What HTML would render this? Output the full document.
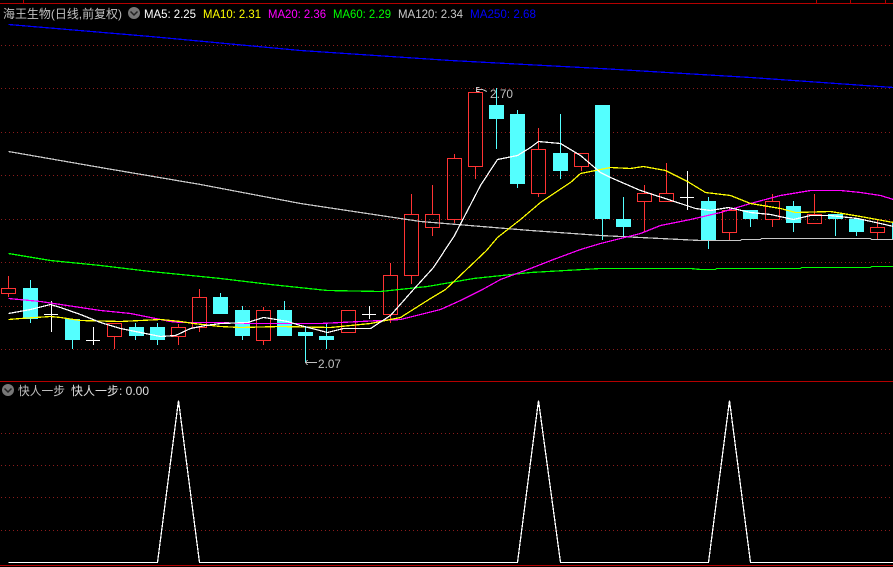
<!DOCTYPE html>
<html><head><meta charset="utf-8"><style>
html,body{margin:0;padding:0;background:#000;width:893px;height:567px;overflow:hidden}
svg{display:block}
text{font-family:"Liberation Sans","Noto Sans CJK SC",sans-serif;font-size:12px}
</style></head><body>
<svg width="893" height="567" viewBox="0 0 893 567" xmlns="http://www.w3.org/2000/svg">
<rect width="893" height="567" fill="#000"/>
<g fill="#b40000">
<rect x="0" y="3" width="893" height="1"/><rect x="0" y="381" width="893" height="1"/><rect x="0" y="565" width="893" height="1"/>
<rect x="23" y="0" width="1" height="3"/><rect x="816" y="0" width="1" height="3"/><rect x="850" y="0" width="1" height="3"/><rect x="885" y="0" width="1" height="3"/>
</g>
<g stroke="#8c1c1c" stroke-width="1" stroke-dasharray="1 3" shape-rendering="crispEdges" fill="none">
<path d="M1 45.5H893M1 88.5H893M1 132.5H893M1 175.500H893M1 219.500H893M1 262.500H893M1 306.500H893M1 349.500H893M1 433.500H893M1 465.500H893M1 497.500H893M1 530.500H893"/>
</g>
<text x="490" y="98" fill="#c0c0c0" textLength="23" lengthAdjust="spacingAndGlyphs">2.70</text>
<g shape-rendering="crispEdges">
<path stroke="#54ffff" fill="none" d="M30.5 280V323M72.5 340V349M135.5 323V340M157.5 323V345M220.5 293V297M242.5 306V340M284.5 301V310M305.5 327V362M326.5 323V349M496.5 88V149M517.5 110V188M560.5 114V179M602.5 219V240M623.5 197V236M708.5 197V249M750.5 219V227M793.5 201V232M835.5 219V236M856.5 232V236"/>
<g fill="#54ffff">
<rect x="23" y="288" width="15" height="31"/><rect x="65" y="319" width="15" height="21"/><rect x="129" y="327" width="15" height="9"/><rect x="150" y="327" width="15" height="13"/><rect x="213" y="297" width="15" height="17"/><rect x="235" y="310" width="15" height="26"/><rect x="277" y="310" width="15" height="26"/><rect x="298" y="332" width="15" height="4"/><rect x="319" y="336" width="15" height="4"/><rect x="489" y="105" width="15" height="14"/><rect x="510" y="114" width="15" height="70"/><rect x="553" y="153" width="15" height="18"/><rect x="595" y="105" width="15" height="114"/><rect x="616" y="219" width="15" height="8"/><rect x="701" y="201" width="15" height="39"/><rect x="743" y="210" width="15" height="9"/><rect x="786" y="206" width="15" height="17"/><rect x="828" y="214" width="15" height="5"/><rect x="849" y="219" width="15" height="13"/><rect x="892" y="223" width="1" height="17"/>
</g>
<path stroke="#ff3333" fill="none" d="M1.5 288.5h14v5h-14zM8.5 276v12M8.5 294v3
M107.5 323.5h14v13h-14zM114.5 337v12
M171.5 327.5h14v9h-14zM178.5 324v3M178.5 337v8
M192.5 297.5h14v30h-14zM199.5 289v8M199.5 328v4
M256.5 310.5h14v30h-14zM263.5 307v3M263.5 341v4
M341.5 310.5h14v22h-14z
M383.5 275.5h14v39h-14zM390.5 263v12M390.5 315v8
M404.5 214.5h14v61h-14zM411.5 194v20M411.5 276v8
M425.5 214.5h14v13h-14zM432.5 185v29M432.5 228v8
M447.5 158.5h14v61h-14zM454.5 154v4M454.5 220v3
M468.5 92.5h14v74h-14zM475.5 167v12
M531.5 149.5h14v44h-14zM538.5 128v21M538.5 194v3
M574.5 153.5h14v13h-14zM581.5 167v4
M637.5 193.5h14v8h-14zM644.5 185v8M644.5 202v30
M659.5 193.5h14v8h-14zM666.5 163v30
M722.5 210.5h14v22h-14zM729.5 207v3M729.5 233v7
M765.5 201.5h14v18h-14zM772.5 194v7M772.5 220v7
M807.5 214.5h14v9h-14zM814.5 194v20
M870.5 227.5h14v5h-14zM877.5 220v7M877.5 233v6"/>
<path stroke="#fff" fill="none" d="M44 314.5H58M51.5 301V332M86 340.5H100M93.5 327V345M362 314.5H376M369.5 306V319M680 197.5H694M687.5 171V210"/>
</g>
<g fill="none" stroke-width="1.25" shape-rendering="crispEdges" transform="translate(0.5 0.5)">
<polyline stroke="#0000ff" points="8,24 150,36 300,50 450,60 600,68 750,77 893,87"/>
<polyline stroke="#c8c8c8" points="8,151 100,167 200,184 300,203 380,215 420,221 530,230 600,235 660,238 700,240 740,240 741,239 760,239 761,238 870,238 871,239 893,239"/>
<polyline stroke="#00ff00" points="8,253 50,260 100,265 150,271 220,278 270,284 327,290 380,291 427,286 473,278 530,272 600,268 690,268 700,269 715,269 716,268 800,268 801,267 870,267 871,266 893,266"/>
<polyline stroke="#ff00ff" points="8,298 40,301 60,304 100,310 130,313 170,321 180,322 220,322 242,323 320,323 360,321 400,319 440,309 460,300 482,289 500,279 530,268 553,259 580,249 600,243 640,233 660,225 690,219 720,212 750,203 780,195 810,190 840,190 860,192 880,195 893,199"/>
<polyline stroke="#ffff00" points="8,319 20,318 50,316 60,317 80,320 120,321 160,319 180,321 193,323 220,326 240,327 280,326 330,327 370,323 400,317 430,298 445,289 486,250 497,237 520,219 540,202 570,182 580,173 600,169 610,167 630,168 643,166 665,170 687,181 705,192 730,195 750,203 780,208 795,212 830,211 860,216 893,222"/>
<polyline stroke="#ffffff" points="8,313 30,309 50,304 60,307 80,314 100,322 120,328 140,332 160,336 175,335 190,328 205,325 220,323 247,322 263,317 270,318 287,321 300,325 327,332 343,328 370,328 390,315 413,289 433,267 454,235 480,185 497,159 517,155 530,147 538,141 560,143 580,155 600,172 610,177 640,190 680,203 695,208 710,210 728,207 750,212 770,214 793,219 810,215 830,215 857,218 880,223 893,226"/>
<polyline stroke="#ffffff" points="8,562 157,562 178,400 199,562 517,562 538,400 560,562 708,562 729,400 750,562 893,562"/>
</g>
<g>
<circle cx="134" cy="13" r="6" fill="#777"/>
<path d="M130.5 11.5L134 15L137.5 11.5" fill="none" stroke="#222" stroke-width="1.5"/>
<circle cx="8" cy="390" r="6" fill="#777"/>
<path d="M4.500 388.500L8 392L11.500 388.500" fill="none" stroke="#222" stroke-width="1.5"/>
</g>
<text x="3" y="18" fill="#c0c0c0" textLength="119" lengthAdjust="spacingAndGlyphs">海王生物(日线,前复权)</text>
<text x="144" y="18" fill="#ffffff" textLength="52" lengthAdjust="spacingAndGlyphs">MA5: 2.25</text>
<text x="203" y="18" fill="#ffff00" textLength="58" lengthAdjust="spacingAndGlyphs">MA10: 2.31</text>
<text x="268" y="18" fill="#ff00ff" textLength="58" lengthAdjust="spacingAndGlyphs">MA20: 2.36</text>
<text x="333" y="18" fill="#00ff00" textLength="58" lengthAdjust="spacingAndGlyphs">MA60: 2.29</text>
<text x="398" y="18" fill="#c8c8c8" textLength="65" lengthAdjust="spacingAndGlyphs">MA120: 2.34</text>
<text x="470" y="18" fill="#0000ff" textLength="66" lengthAdjust="spacingAndGlyphs">MA250: 2.68</text>
<text x="18" y="395" fill="#c0c0c0" textLength="47" lengthAdjust="spacingAndGlyphs">快人一步</text>
<text x="71" y="395" fill="#e0e0e0" textLength="78" lengthAdjust="spacingAndGlyphs">快人一步: 0.00</text>
<text x="318" y="368" fill="#c0c0c0" textLength="23" lengthAdjust="spacingAndGlyphs">2.07</text>
<path d="M479.500 87.500H476.500V91.500H479.500M476.500 89.500H482.500L487 91.500M307.500 360L305.500 362.500L307.500 365M305.500 362.500H317" fill="none" stroke="#c0c0c0" stroke-width="1" shape-rendering="crispEdges"/>
</svg>
</body></html>
